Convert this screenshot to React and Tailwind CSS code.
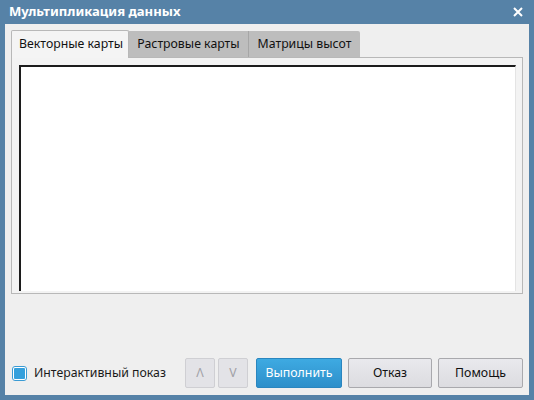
import React from "react";

export default function App() {
  const font = { fontFamily: '"Noto Sans", "Open Sans", sans-serif' };
  return (
    <div className="w-[534px] h-[400px] bg-[#5682a7] flex flex-col px-[5px] pb-[5px]" style={font}>
      <div className="h-[24px] flex items-center justify-between pl-[4px] pr-[6px]">
        <span className="text-white font-bold text-[13.1px] leading-none whitespace-nowrap">Мультипликация данных</span>
        <svg width="10" height="10" viewBox="0 0 10 10">
          <path d="M1 1 L9 9 M9 1 L1 9" stroke="white" strokeWidth="2" />
        </svg>
      </div>
      <div className="flex-1 bg-[#efefef] flex flex-col px-[6px] pt-[5px] pb-[7px]">
        <div className="flex items-end h-[28px]">
          <div className="h-[28px] w-[118px] bg-[#f4f4f4] border border-b-0 border-[#b8b8b8] rounded-t-[2px] flex items-center pl-[7px] text-[12.3px] text-[#111] relative z-10 -mb-px whitespace-nowrap">
            Векторные карты
          </div>
          <div className="h-[26px] w-[120px] bg-[#bdbdbd] border-r border-[#a6a6a6] flex items-center justify-center text-[12.3px] text-[#111] whitespace-nowrap">
            Растровые карты
          </div>
          <div className="h-[26px] w-[111px] bg-[#bdbdbd] rounded-tr-[2px] flex items-center justify-center text-[12.3px] text-[#111] whitespace-nowrap">
            Матрицы высот
          </div>
        </div>
        <div className="h-[237px] border border-[#b8b8b8] bg-[#f3f3f3] pt-[7px] pl-[7px] pr-[6px] pb-[2px] flex">
          <div className="flex-1 bg-white border-t-2 border-l-2 border-[#1c1c1c] border-r border-r-[#e4e4e4]"></div>
        </div>
        <div className="flex-1"></div>
        <div className="flex items-center h-[30px]">
          <div className="flex items-center ml-[1px]">
            <div className="w-[15px] h-[15px] rounded-[3px] border border-[#3a9bd4] bg-white flex items-center justify-center">
              <div className="w-[11px] h-[11px] bg-[#34a0dc] rounded-[1px]"></div>
            </div>
            <span className="ml-[7px] text-[12.3px] text-[#1a1a1a] whitespace-nowrap">Интерактивный показ</span>
          </div>
          <div className="flex-1"></div>
          <div className="w-[30px] h-[30px] rounded-[2px] border border-[#cfcfd3] bg-[#e3e3e7] flex items-center justify-center text-[12.3px] text-[#a0a0a6]">Λ</div>
          <div className="ml-[3px] w-[30px] h-[30px] rounded-[2px] border border-[#cfcfd3] bg-[#e3e3e7] flex items-center justify-center text-[12.3px] text-[#a0a0a6]">V</div>
          <div className="ml-[8px] w-[86px] h-[30px] rounded-[2px] border border-[#2a86bf] bg-gradient-to-b from-[#3eaae2] to-[#2d8fca] flex items-center justify-center text-[12.3px] text-white">Выполнить</div>
          <div className="ml-[6px] w-[84px] h-[30px] rounded-[2px] border border-[#a9a9ad] bg-gradient-to-b from-[#e9e9ed] to-[#dcdce0] flex items-center justify-center text-[12.3px] text-[#111]">Отказ</div>
          <div className="ml-[6px] w-[85px] h-[30px] rounded-[2px] border border-[#a9a9ad] bg-gradient-to-b from-[#e9e9ed] to-[#dcdce0] flex items-center justify-center text-[12.3px] text-[#111]">Помощь</div>
        </div>
      </div>
    </div>
  );
}
